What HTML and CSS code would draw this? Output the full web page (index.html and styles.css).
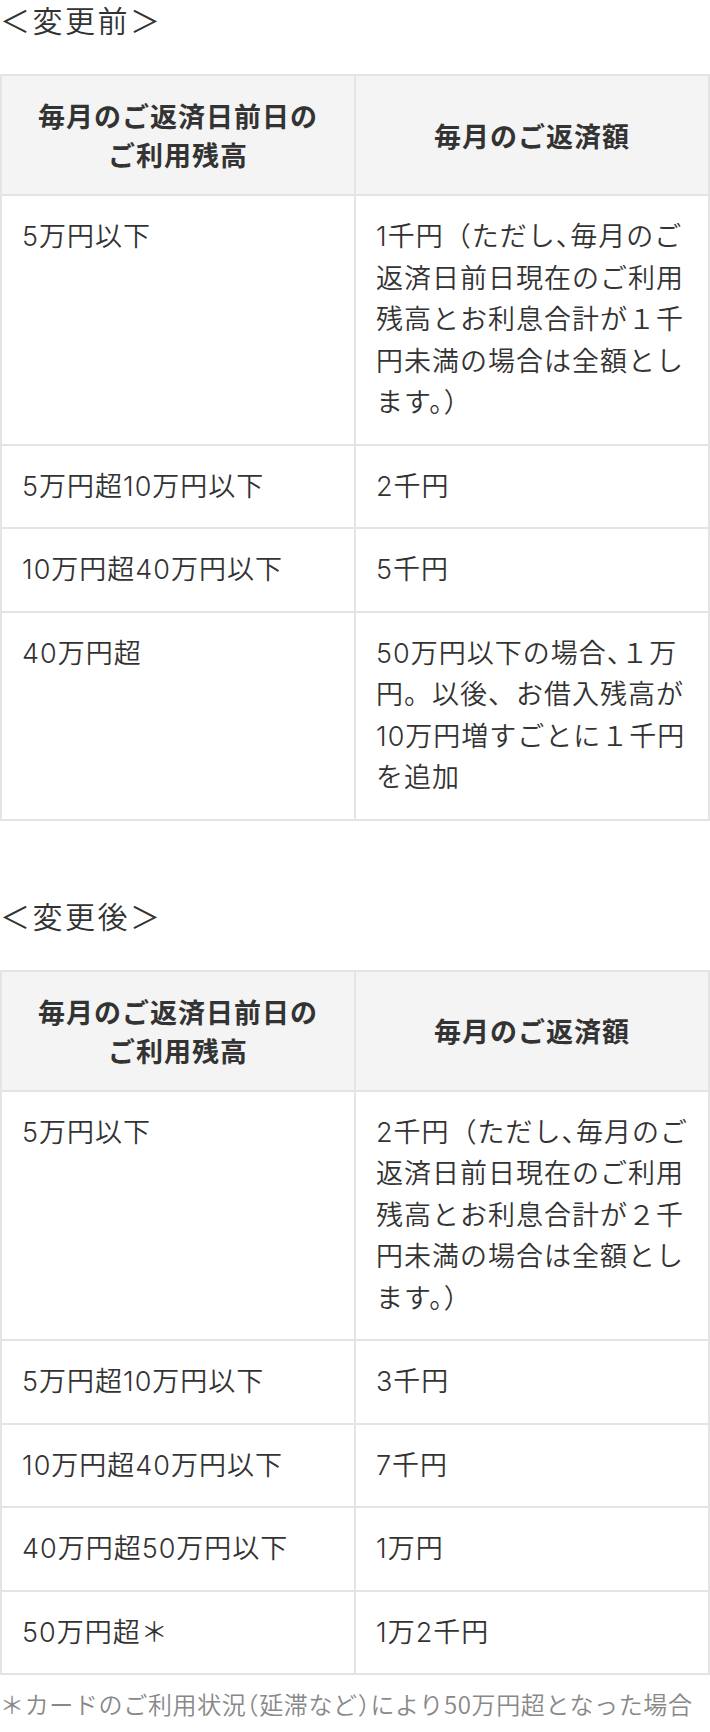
FILE: index.html
```html
<!DOCTYPE html>
<html lang="ja">
<head>
  <meta charset="UTF-8" />
  <meta name="viewport" content="width=device-width, initial-scale=1.0"/>
  <title>毎月のご返済額の変更</title>
  <link rel="stylesheet" href="styles.css">
</head>
<body>

<section class="block">
  <h2 class="block-title">＜変更前＞</h2>
  <table class="repay">
    <colgroup><col class="col-half"><col class="col-half"></colgroup>
    <thead>
      <tr>
        <th>毎月のご返済日前日の<br>ご利用残高</th>
        <th>毎月のご返済額</th>
      </tr>
    </thead>
    <tbody>
      <tr>
        <td>5万円以下</td>
        <td class="lines">1千円（ただし<span class="half">、</span>毎月のご<br>返済日前日現在のご利用<br>残高とお利息合計が１千<br>円未満の場合は全額とし<br>ます。）</td>
      </tr>
      <tr>
        <td>5万円超10万円以下</td>
        <td>2千円</td>
      </tr>
      <tr>
        <td>10万円超40万円以下</td>
        <td>5千円</td>
      </tr>
      <tr>
        <td>40万円超</td>
        <td class="lines">50万円以下の場合<span class="half">、</span>１万<br>円。以後、お借入残高が<br>10万円増すごとに１千円<br>を追加</td>
      </tr>
    </tbody>
  </table>
</section>

<section class="block">
  <h2 class="block-title">＜変更後＞</h2>
  <table class="repay">
    <colgroup><col class="col-half"><col class="col-half"></colgroup>
    <thead>
      <tr>
        <th>毎月のご返済日前日の<br>ご利用残高</th>
        <th>毎月のご返済額</th>
      </tr>
    </thead>
    <tbody>
      <tr>
        <td>5万円以下</td>
        <td class="lines">2千円（ただし<span class="half">、</span>毎月のご<br>返済日前日現在のご利用<br>残高とお利息合計が２千<br>円未満の場合は全額とし<br>ます。）</td>
      </tr>
      <tr>
        <td>5万円超10万円以下</td>
        <td>3千円</td>
      </tr>
      <tr>
        <td>10万円超40万円以下</td>
        <td>7千円</td>
      </tr>
      <tr>
        <td>40万円超50万円以下</td>
        <td>1万円</td>
      </tr>
      <tr>
        <td>50万円超＊</td>
        <td>1万2千円</td>
      </tr>
    </tbody>
  </table>
  <p class="footnote">＊カードのご利用状況<span class="half">（</span>延滞など<span class="half">）</span>により50万円超となった場合</p>
</section>

</body>
</html>
```

FILE: styles.css
```css
body {
  margin: 0;
  padding: 0;
  background: #fff;
  font-family: "Noto Sans CJK JP", "Noto Sans", sans-serif;
  color: #333;
  letter-spacing: 1px;
}

.block + .block {
  margin-top: 75px;
}

.block-title {
  margin: 0 0 36px;
  font-size: 30px;
  line-height: 38px;
  font-weight: 350;
  letter-spacing: 2.5px;
}

.repay {
  width: 100%;
  border-collapse: separate;
  border-spacing: 0;
  table-layout: fixed;
  border-top: 2px solid #e4e4e4;
  border-left: 2px solid #e4e4e4;
  font-size: 27px;
}

.col-half {
  width: 50%;
}

.repay th,
.repay td {
  padding: 20px;
  border-right: 2px solid #e4e4e4;
  border-bottom: 2px solid #e4e4e4;
}

.repay th {
  background: #f4f4f4;
  line-height: 39px;
  font-weight: bold;
  text-align: center;
  vertical-align: middle;
}

/* wider, lighter digits like the original figures */
.repay td {
  font-family: "Inter", "Noto Sans CJK JP", sans-serif;
  line-height: 41.5px;
  font-weight: 350;
  text-align: left;
  vertical-align: top;
}

/* long cells keep the same line breaks as the printed notice */
.repay .lines {
  white-space: nowrap;
}

.footnote {
  margin: 11px 0 0;
  font-size: 24px;
  line-height: 36px;
  font-weight: 350;
  color: #888;
  letter-spacing: .65px;
}

/* half-width punctuation */
.half {
  font-feature-settings: "halt";
}
```
